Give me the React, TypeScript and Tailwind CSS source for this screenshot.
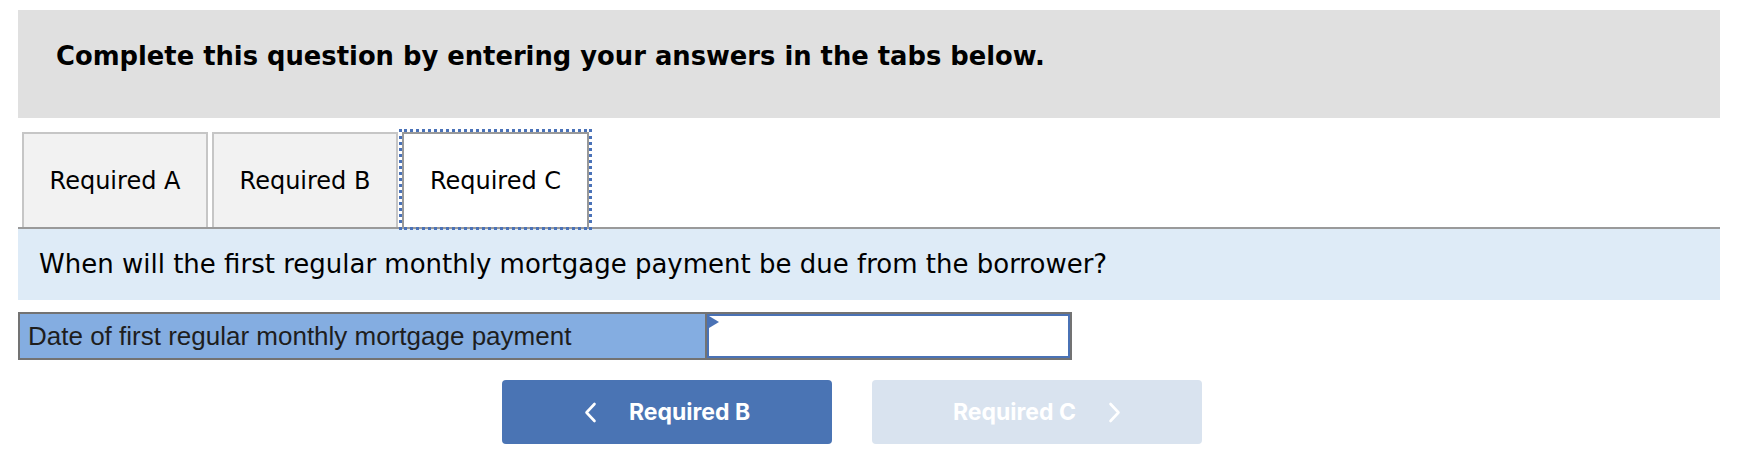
import React from 'react';

const verdana = { fontFamily: '"DejaVu Sans", Verdana, sans-serif' };

function Tab({ label, active }: { label: string; active?: boolean }) {
  if (active) {
    return (
      <div className="relative flex h-[95px] w-[187px] items-center justify-center border-2 border-b-0 border-[#999999] bg-white text-[24px] text-black outline-[3px] outline-dotted outline-[#4a72b8] outline-offset-0">
        {label}
      </div>
    );
  }
  return (
    <div className="flex h-[95px] w-[186px] items-center justify-center border-2 border-b-0 border-[#c6c6c6] bg-[#f2f2f2] text-[24px] text-black">
      {label}
    </div>
  );
}

function Chevron({ dir }: { dir: 'left' | 'right' }) {
  return (
    <svg width="13" height="21" viewBox="0 0 13 21" fill="none">
      <path
        d={dir === 'left' ? 'M10.5 2 L2.5 10.5 L10.5 19' : 'M2.5 2 L10.5 10.5 L2.5 19'}
        stroke="white"
        strokeWidth="2.6"
        strokeLinecap="round"
        strokeLinejoin="round"
      />
    </svg>
  );
}

export default function App() {
  return (
    <div className="h-[454px] w-[1752px] bg-white pl-[18px] pt-[10px]" style={verdana}>
      <div className="w-[1702px]">
        <div className="h-[108px] bg-[#e0e0e0] pl-[38px] pt-[31px]">
          <h2 className="text-[25.8px] font-bold leading-[30px] text-black">
            Complete this question by entering your answers in the tabs below.
          </h2>
        </div>

        <div className="mt-[14px] flex items-end gap-[4px] border-b-2 border-[#9a9a9a] pl-[4px]">
          <Tab label="Required A" />
          <Tab label="Required B" />
          <Tab label="Required C" active />
        </div>

        <div className="flex h-[71px] items-center bg-[#deebf7] pl-[21px] text-[26px] text-black">
          When will the first regular monthly mortgage payment be due from the borrower?
        </div>

        <div className="mt-[12px] flex h-[48px] w-[1054px] border-2 border-[#737373]">
          <div
            className="flex w-[687px] items-center border-r-2 border-[#737373] bg-[#84ade1] pl-[8px] text-[26px] text-[#1e1e1e]"
            style={{ fontFamily: '"Liberation Sans", Arial, sans-serif' }}
          >
            Date of first regular monthly mortgage payment
          </div>
          <div className="relative flex-1 border-2 border-[#4a72b5] bg-white">
            <span className="absolute left-0 top-0 h-0 w-0 border-b-[6px] border-l-[10px] border-t-[6px] border-b-transparent border-l-[#4a72b5] border-t-transparent" />
          </div>
        </div>

        <div
          className="ml-[484px] mt-[20px] flex gap-[40px]"
          style={{ fontFamily: 'Inter, Roboto, sans-serif' }}
        >
          <button className="flex h-[64px] w-[330px] items-center justify-center gap-[32px] rounded-[4px] bg-[#4a74b4] text-[23px] font-bold text-white">
            <Chevron dir="left" />
            <span>Required B</span>
          </button>
          <button className="flex h-[64px] w-[330px] items-center justify-center gap-[32px] rounded-[4px] bg-[#d9e3ef] text-[23px] font-bold text-white">
            <span>Required C</span>
            <Chevron dir="right" />
          </button>
        </div>
      </div>
    </div>
  );
}
